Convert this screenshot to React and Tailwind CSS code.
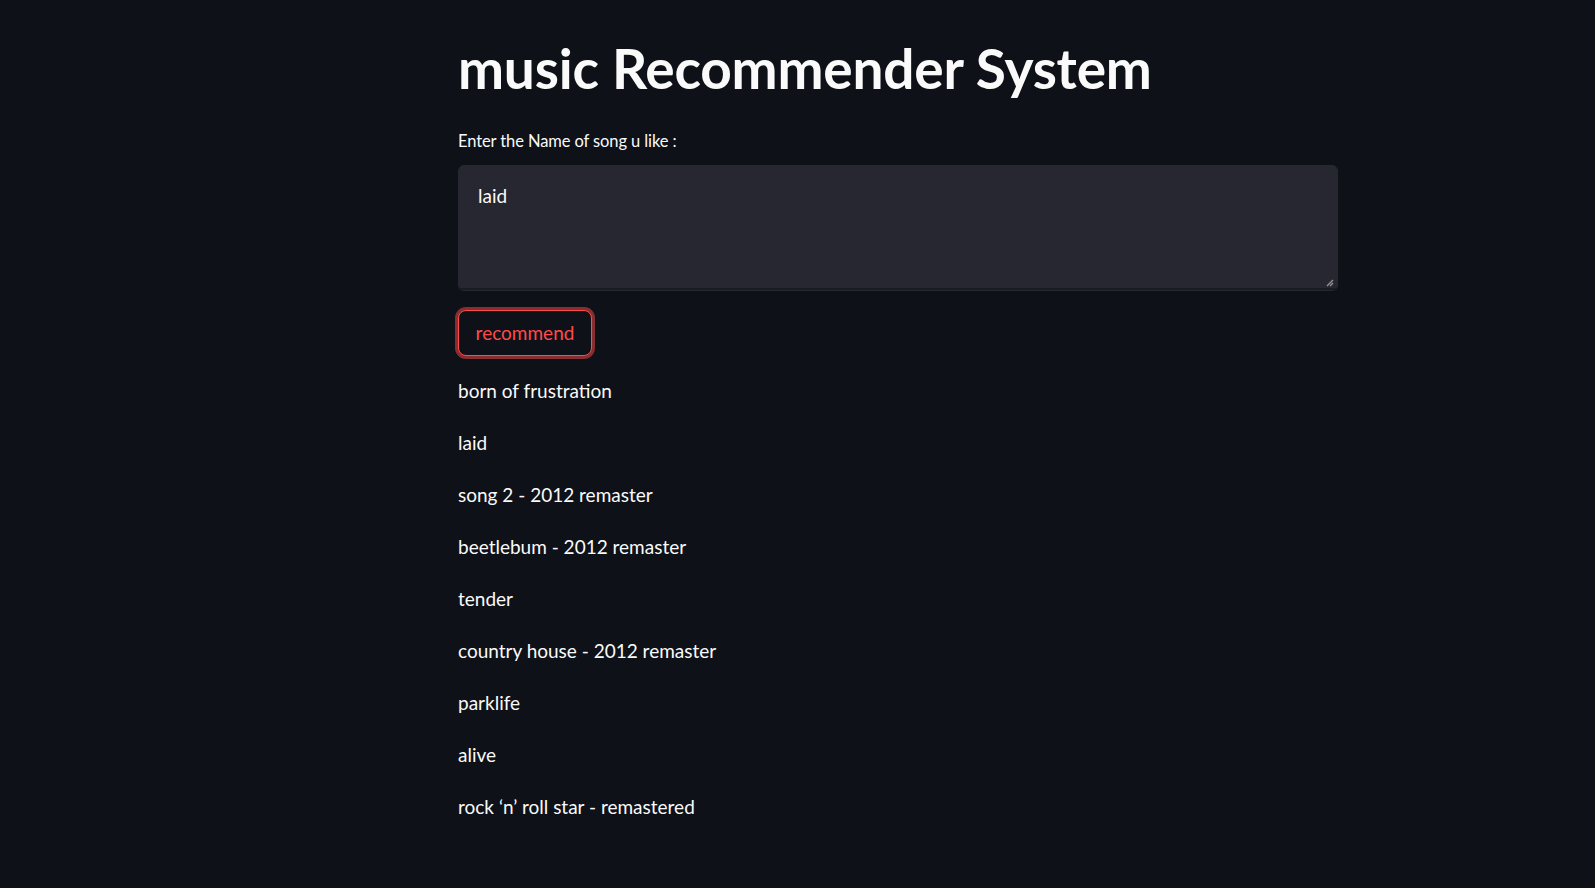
const songs = [
  "born of frustration",
  "laid",
  "song 2 - 2012 remaster",
  "beetlebum - 2012 remaster",
  "tender",
  "country house - 2012 remaster",
  "parklife",
  "alive",
  "rock \u2018n\u2019 roll star - remastered",
];

export default function App() {
  return (
    <div
      className="min-h-[888px] w-full bg-[#0e1117] text-[#fafafa]"
      style={{ fontFamily: "Lato, 'Noto Sans', sans-serif" }}
    >
      <div className="ml-[458px] w-[880px] pt-[33px]">
        <h1 className="text-[55px] font-bold leading-[70px] tracking-[-0.2px]">music Recommender System</h1>

        <label className="mt-[28px] block text-[16.5px] leading-[20px] tracking-[-0.1px]">Enter the Name of song u like :</label>

        <div className="relative mt-[14px] h-[126px] rounded-[6px] border border-[#262730] bg-[#262730]">
          <div className="px-[19px] pt-[16px] text-[19px] leading-[28px]">laid</div>
          <svg className="absolute bottom-[3px] right-[3px]" width="8" height="8" viewBox="0 0 8 8">
            <path d="M7 1 L1 7 M7 4 L4 7" stroke="#9a9a9a" strokeWidth="1.2" />
          </svg>
          <div className="absolute inset-x-0 bottom-0 h-[2px] bg-[#1a1c23]" />
        </div>

        <button className="mt-[19px] h-[46px] w-[134px] rounded-[8px] border border-[#ff4b4b] bg-[#0e1117] text-[19px] text-[#ff4b4b] shadow-[0_0_0_3px_rgba(255,75,75,0.5)]">
          recommend
        </button>

        <div className="mt-[21px] flex flex-col gap-[24px]">
          {songs.map((s) => (
            <p key={s} className="text-[19px] leading-[28px]">{s}</p>
          ))}
        </div>
      </div>
    </div>
  );
}
